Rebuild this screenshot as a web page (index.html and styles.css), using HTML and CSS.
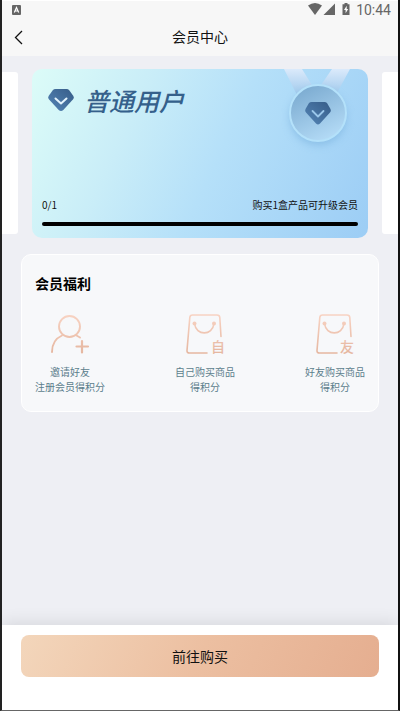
FILE: index.html
```html
<!DOCTYPE html>
<html lang="zh-CN">
<head>
<meta charset="utf-8">
<meta name="viewport" content="width=device-width, initial-scale=1">
<title>会员中心</title>
<link rel="stylesheet" href="styles.css">
</head>
<body>
<div class="status">
  <svg class="app-icon" viewBox="0 0 9 10" aria-hidden="true"><rect width="9" height="10" rx="1" fill="#666"/><path d="M2.3 7.5 4.5 2.5 6.7 7.5M3.2 6h2.6" fill="none" stroke="#fff" stroke-width="1.2"/></svg>
  <svg class="signals" viewBox="0 0 44 13" aria-hidden="true"><g fill="#666"><path d="M0 2.600Q7-2.400 14 2.600L7 12Z"/><path d="M27 .5V12H15.500Z"/><path d="M34.500 1.300h2V0h3v1.300h2V12h-7Z"/></g><path d="M38.700 2.800 36 7h1.600v3.200L40.200 6h-1.500Z" fill="#fff"/></svg>
  <span class="clock">10:44</span>
</div>
<header class="nav">
  <button class="back" type="button" aria-label="返回"><svg viewBox="0 0 9 15" aria-hidden="true"><path d="M8 1 1.500 7.500 8 14" fill="none" stroke="#111" stroke-width="1.300"/></svg></button>
  <h1>会员中心</h1>
</header>
<main>
  <section class="carousel">
    <div class="slide"></div>
    <article class="level">
      <svg class="medal" viewBox="0 0 86 90" aria-hidden="true">
        <defs>
          <linearGradient id="ribbon" x1="0" y1="0" x2="0" y2="1"><stop offset="0" stop-color="#dbeafb"/><stop offset="1" stop-color="#9fc9ec"/></linearGradient>
          <linearGradient id="disc" x1=".2" y1="0" x2=".7" y2="1"><stop offset="0" stop-color="#79a9cf"/><stop offset="1" stop-color="#b5dcf7"/></linearGradient>
          <linearGradient id="gem" x1="0" y1="1" x2="1" y2="0"><stop offset="0" stop-color="#5586b7"/><stop offset="1" stop-color="#365c88"/></linearGradient>
          <filter id="soft" x="-30%" y="-30%" width="160%" height="160%"><feGaussianBlur stdDeviation="4"/></filter>
        </defs>
        <path d="M5 0h18l13 21-18 5ZM53 0h18L58 24l-18-5Z" fill="url(#ribbon)"/>
        <circle cx="39" cy="48" r="28" fill="#6aa5d6" opacity=".5" filter="url(#soft)"/>
        <circle cx="39" cy="44" r="28" fill="url(#disc)" stroke="#b4e1fa" stroke-width="2"/>
        <path d="M32.500 33h13q1.500 0 2.500 1l3.500 6q1 2-.5 3.500L41 54.500q-2 1.800-4 0L27 43.500q-1.500-1.500-.5-3.500l3.500-6q1-1 2.500-1Z" fill="url(#gem)"/>
        <path d="m33.500 42 5.500 5.500 5.500-5.500" fill="none" stroke="#9bc7ea" stroke-width="1.800" stroke-linecap="round" stroke-linejoin="round"/>
      </svg>
      <div class="level-name">
        <svg class="gem" viewBox="0 0 26 24" aria-hidden="true"><path d="M7.500 1h11q1.800 0 2.900 1.400l3.800 5.300q1.300 2-.3 3.800L15.300 22q-2.300 2.200-4.600 0L1.100 11.500q-1.600-1.800-.3-3.800l3.800-5.300Q5.700 1 7.500 1Z" fill="url(#gem)"/><path d="m7.500 10.500 5.500 5 5.500-5" fill="none" stroke="#e3f3fd" stroke-width="2" stroke-linecap="round" stroke-linejoin="round"/></svg>
        <h2>普通用户</h2>
      </div>
      <div class="progress">
        <div class="progress-text"><span>0/1</span><span>购买1盒产品可升级会员</span></div>
        <div class="bar"></div>
      </div>
    </article>
    <div class="slide"></div>
  </section>

  <section class="benefits">
    <h3>会员福利</h3>
    <ul>
      <li>
        <svg viewBox="0 0 40 40" aria-hidden="true"><defs><linearGradient id="peach" gradientUnits="userSpaceOnUse" x1="0" y1="0" x2="0" y2="40"><stop offset="0" stop-color="#f8d3c3"/><stop offset="1" stop-color="#e5b69f"/></linearGradient></defs><g fill="none" stroke="url(#peach)" stroke-width="1.900" stroke-linecap="round"><circle cx="19.500" cy="12.500" r="10.500"/><path d="M2 38Q2 26 12 21.500M26.500 21.500 30 23.500"/><path d="M26.500 32.500h11.500M32 27v11.500" stroke-width="2.200"/></g></svg>
        <p>邀请好友<br>注册会员得积分</p>
      </li>
      <li>
        <svg viewBox="0 0 40 40" aria-hidden="true"><path d="M36 22.500 34.800 3.500Q34.600 1 32 1H7.500Q5 1 4.800 3.500L2 36.500Q1.800 39 4.500 39H22M9.500 9.500C11 22 27.500 22 29 9.500" fill="none" stroke="url(#peach)" stroke-width="1.600" stroke-linecap="round"/><g fill="url(#peach)"><circle cx="9.500" cy="9.500" r="2"/><circle cx="29" cy="9.500" r="2"/></g><text x="26" y="38" class="mark">自</text></svg>
        <p>自己购买商品<br>得积分</p>
      </li>
      <li>
        <svg viewBox="0 0 40 40" aria-hidden="true"><path d="M36 22.500 34.800 3.500Q34.600 1 32 1H7.500Q5 1 4.800 3.500L2 36.500Q1.800 39 4.500 39H22M9.500 9.500C11 22 27.500 22 29 9.500" fill="none" stroke="url(#peach)" stroke-width="1.600" stroke-linecap="round"/><g fill="url(#peach)"><circle cx="9.500" cy="9.500" r="2"/><circle cx="29" cy="9.500" r="2"/></g><text x="25" y="38" class="mark">友</text></svg>
        <p>好友购买商品<br>得积分</p>
      </li>
    </ul>
  </section>
</main>
<footer>
  <button class="buy" type="button">前往购买</button>
</footer>
</body>
</html>
```
FILE: styles.css
```css
* { box-sizing: border-box; }

body {
  margin: 0;
  min-height: 100vh;
  display: flex;
  flex-direction: column;
  background: #eeeff4;
  border-left: 2px solid #222;
  border-right: 2px solid #111;
  border-bottom: 1px solid #666;
  font-family: "Noto Sans CJK SC", sans-serif;
  color: #111;
}

h1, h2, h3, p, ul { margin: 0; padding: 0; }

button {
  border: 0;
  padding: 0;
  font: inherit;
  color: inherit;
  cursor: pointer;
}

.status {
  display: flex;
  align-items: center;
  height: 18px;
  padding: 0 7px 0 10px;
  background: #f7f7f7;
  border-top: 1px solid #fff;
}

.app-icon { width: 9px; height: 10px; }
.signals { width: 44px; height: 13px; margin-left: auto; }

.clock {
  margin-left: 4px;
  font: 14px/18px Roboto, sans-serif;
  color: #666;
}

.nav {
  display: grid;
  grid-template-columns: 32px 1fr 32px;
  align-items: center;
  height: 38px;
  background: #f7f7f7;
}

.nav h1 {
  padding-bottom: 2px;
  font-size: 14px;
  line-height: 20px;
  font-weight: 400;
  text-align: center;
}

.back {
  height: 38px;
  background: none;
}

.back svg { display: block; width: 9px; height: 15px; margin-left: 12px; }

main { flex: 1; }

.carousel {
  display: grid;
  grid-template-columns: 16px 1fr 16px;
  gap: 14px;
  padding-top: 13px;
}

.slide { margin: 3px 0 4px; background: #fff; }
.slide:first-child { border-radius: 0 3px 3px 0; }
.slide:last-child { border-radius: 3px 0 0 3px; }

.level {
  position: relative;
  display: flex;
  flex-direction: column;
  justify-content: space-between;
  min-height: 169px;
  padding: 15px 10px 12px;
  border-radius: 10px;
  background: linear-gradient(115deg, #dcfcf8 0%, #c9edf8 30%, #b5e0f9 55%, #9ccdf5 100%);
}

.medal {
  position: absolute;
  top: 0;
  right: 3px;
  width: 86px;
  height: 90px;
}

.level-name {
  display: flex;
  align-items: center;
  gap: 10px;
  padding-left: 6px;
}

.gem { width: 26px; height: 24px; }

.level-name h2 {
  font-size: 25px;
  line-height: 32px;
  font-weight: 500;
  font-style: italic;
  color: #35608b;
}

.progress-text {
  display: flex;
  justify-content: space-between;
  margin-bottom: 10px;
  font-size: 10px;
  line-height: 15px;
}

.bar { height: 4px; border-radius: 2px; background: #000; }

.benefits {
  margin: 16px 19px 0;
  padding: 18px 13px 17px;
  border: 1px solid #fff;
  border-radius: 10px;
  background: #f7f8fa;
}

.benefits h3 {
  font-size: 14px;
  line-height: 20px;
  font-weight: 700;
  color: #000;
}

.benefits ul {
  display: flex;
  justify-content: space-between;
  margin-top: 21px;
  list-style: none;
}

.benefits li {
  display: flex;
  flex-direction: column;
  align-items: center;
  gap: 10px;
}

.benefits svg { width: 40px; height: 40px; overflow: visible; }

.benefits p {
  font-size: 10px;
  line-height: 15px;
  text-align: center;
  color: #5c7e8c;
}

.mark { font-size: 14px; font-weight: 500; fill: url(#peach); }

footer {
  padding: 10px 19px 33px;
  background: #fff;
  box-shadow: 0 -2px 16px rgba(0, 0, 0, .1);
}

.buy {
  display: block;
  width: 100%;
  height: 42px;
  border-radius: 8px;
  background: linear-gradient(115deg, #f3d6bb, #ecbfa1 50%, #e5ae90);
  font-size: 14px;
}
```
